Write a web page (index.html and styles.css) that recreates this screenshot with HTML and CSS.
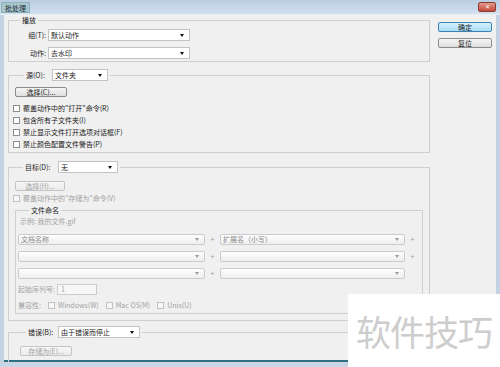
FILE: index.html
```html
<!DOCTYPE html>
<html lang="zh-CN">
<head>
    <meta charset="UTF-8">
    <title>批处理</title>
    <link rel="stylesheet" href="styles.css">
</head>
<body>
    <div class="window">
        <div class="titlebar">
            <span class="title">批处理</span>
            <span class="close">✕</span>
        </div>
        <div class="frame">
            <div class="main">
                <!-- 播放 -->
                <fieldset class="group play">
                    <legend class="legend-text">播放</legend>
                    <div class="rows">
                        <div class="row">
                            <span class="lbl lbl-play">组(T):</span>
                            <div class="select w142">默认动作</div>
                        </div>
                        <div class="row">
                            <span class="lbl lbl-play">动作:</span>
                            <div class="select w142">去水印</div>
                        </div>
                    </div>
                </fieldset>

                <!-- 源 -->
                <fieldset class="group source">
                    <legend class="legend-row lg-source">
                        <span class="lbl w24">源(O):</span>
                        <div class="select w56">文件夹</div>
                    </legend>
                    <button class="btn small">选择(C)...</button>
                    <div class="checks">
                        <label class="check"><span class="box"></span>覆盖动作中的"打开"命令(R)</label>
                        <label class="check"><span class="box"></span>包含所有子文件夹(I)</label>
                        <label class="check"><span class="box"></span>禁止显示文件打开选项对话框(F)</label>
                        <label class="check"><span class="box"></span>禁止颜色配置文件警告(P)</label>
                    </div>
                </fieldset>

                <!-- 目标 -->
                <fieldset class="group target">
                    <legend class="legend-row lg-target">
                        <span class="lbl w31">目标(D):</span>
                        <div class="select w60">无</div>
                    </legend>
                    <button class="btn small off">选择(H)...</button>
                    <label class="check off single"><span class="box"></span>覆盖动作中的"存储为"命令(V)</label>

                    <fieldset class="naming">
                        <legend class="legend-text">文件命名</legend>
                        <div class="sample off">示例: 我的文件.gif</div>
                        <div class="name-rows">
                            <div class="name-row">
                                <div class="select dis w187">文档名称</div>
                                <span class="plus">+</span>
                                <div class="select dis w185">扩展名（小写）</div>
                                <span class="plus">+</span>
                            </div>
                            <div class="name-row">
                                <div class="select dis w187"></div>
                                <span class="plus">+</span>
                                <div class="select dis w185"></div>
                                <span class="plus">+</span>
                            </div>
                            <div class="name-row">
                                <div class="select dis w187"></div>
                                <span class="plus">+</span>
                                <div class="select dis w185"></div>
                            </div>
                        </div>
                        <div class="serial off">
                            <span>起始序列号:</span>
                            <span class="input">1</span>
                        </div>
                        <div class="compat off">
                            <span>兼容性:</span>
                            <label class="check inline"><span class="box"></span>Windows(W)</label>
                            <label class="check inline"><span class="box"></span>Mac OS(M)</label>
                            <label class="check inline"><span class="box"></span>Unix(U)</label>
                        </div>
                    </fieldset>
                </fieldset>

                <!-- 错误 -->
                <fieldset class="group errors">
                    <legend class="legend-row lg-errors">
                        <span class="lbl w28">错误(B):</span>
                        <div class="select w82">由于错误而停止</div>
                    </legend>
                    <button class="btn small off save">存储为(E)...</button>
                </fieldset>
            </div>

            <div class="side">
                <button class="btn side-btn default">确定</button>
                <button class="btn side-btn">复位</button>
            </div>
        </div>

        <div class="watermark">软件技巧</div>
    </div>
</body>
</html>
```

FILE: styles.css
```css
:root {
    --face: #f0f0f0;
    --line: #cfcfcf;
    --text: #1a1a1a;
    --muted: #a3a3a3;
}

* {
    margin: 0;
    padding: 0;
    box-sizing: border-box;
}

body {
    width: 500px;
    height: 367px;
    overflow: hidden;
    background: var(--face);
    font-family: "Noto Sans CJK SC", "Liberation Sans", sans-serif;
    font-size: 7px;
    line-height: 9px;
    color: var(--text);
}

.window {
    position: relative;
    width: 500px;
    height: 367px;
    display: flex;
    flex-direction: column;
}

/* 标题栏 */
.titlebar {
    height: 15px;
    display: flex;
    align-items: center;
    justify-content: space-between;
    padding: 0 4px 0 1px;
    background: linear-gradient(#b9cde2, #d3e0ee);
    border-bottom: 1px solid #e9eff6;
}

.title {
    height: 11px;
    line-height: 10px;
    padding: 0 3px;
    background: #a8c6cc;
    border: 1px solid #8fb3ba;
    color: #1d2d36;
}

.close {
    width: 18px;
    height: 10px;
    margin-top: -1px;
    border-radius: 2px;
    background: linear-gradient(#e39a8e, #c4483a);
    border: 1px solid #8e3a30;
    color: #fff;
    font-size: 6px;
    line-height: 8px;
    text-align: center;
}

.frame {
    height: 352px;
    display: flex;
    overflow: hidden;
    border-left: 4px solid #c4d3e3;
    border-right: 4px solid #c4d3e3;
    border-bottom: 5px solid #c9d6e6;
    box-shadow: inset 0 -2px 0 #2f6f80;
}

.main {
    width: 422px;
    margin-left: 4px;
    padding-top: 1px;
}

.side {
    width: 54px;
    margin-left: 8px;
    padding-top: 7px;
    display: flex;
    flex-direction: column;
    gap: 6px;
}

/* 分组框 */
.group,
.naming {
    border: 1px solid var(--line);
    min-width: 0;
}

.group {
    width: 422px;
    padding: 0;
}

.legend-text {
    margin-left: 11px;
    padding: 0 2px;
    height: 9px;
    line-height: 9px;
}

.legend-row {
    display: flex;
    align-items: center;
    gap: 2px;
    height: 12px;
    padding: 0 2px;
}

.lg-source { margin-left: 15px; }
.lg-target { margin-left: 14px; }
.lg-errors { margin-left: 17px; }

.lbl { white-space: nowrap; }
.lbl-play { width: 37px; margin-right: 2px; text-align: right; }
.w24 { width: 24px; }
.w31 { width: 31px; }
.w28 { width: 28px; }

.rows {
    padding: 4px 0 2px;
    display: flex;
    flex-direction: column;
    gap: 6px;
}

.row {
    display: flex;
    align-items: center;
    height: 12px;
}

/* 下拉框 */
.select {
    height: 12px;
    display: flex;
    align-items: center;
    padding-left: 2px;
    background: #fff;
    border: 1px solid #c3c3c3;
    white-space: nowrap;
}

.select::after {
    content: "";
    margin-left: auto;
    margin-right: 5px;
    border-left: 2px solid transparent;
    border-right: 2px solid transparent;
    border-top: 3px solid #111;
}

.select.dis {
    height: 11px;
    color: #8a8a8a;
    background: linear-gradient(#fefefe, #eeeeee);
    border-color: #cbcbcb;
    border-radius: 2px;
}

.select.dis::after {
    border-top-color: #9a9a9a;
}

.w142 { width: 142px; }
.w56 { width: 56px; }
.w60 { width: 60px; }
.w82 { width: 82px; }
.w187 { width: 187px; }
.w185 { width: 185px; }

/* 按钮 */
.btn {
    font: inherit;
    color: var(--text);
    height: 10px;
    line-height: 8px;
    background: linear-gradient(#f6f6f6, #dedede);
    border: 1px solid #8c8c8c;
    border-radius: 2px;
}

.btn.small {
    display: block;
    width: 52px;
    margin: 6px 0 0 6px;
}

.btn.off {
    color: var(--muted);
    border-color: #c4c4c4;
    background: linear-gradient(#f6f6f6, #ececec);
}

.target .btn.small { margin-top: 8px; width: 50px; }
.save { margin-top: 8px !important; margin-left: 11px !important; }

.side-btn {
    width: 54px;
    height: 10px;
}

.side-btn.default {
    background: linear-gradient(#d6f0fc, #a9dcf5);
    border-color: #3b83b5;
}

/* 复选框 */
.checks {
    margin-top: 5px;
    padding-bottom: 2px;
}

.check {
    display: flex;
    align-items: center;
    height: 12px;
    padding-left: 4px;
    white-space: nowrap;
}

.box {
    width: 7px;
    height: 7px;
    margin-right: 3px;
    background: #fff;
    border: 1px solid #8e8e8e;
}

.check.off,
.off .check {
    color: var(--muted);
}

.check.off .box,
.off .box {
    border-color: #c2c2c2;
    background: #f7f7f7;
}

.check.single { margin-top: 1px; }

/* 文件命名 */
.naming {
    margin: 2px 6px 6px 6px;
    width: 408px;
    padding: 0 0 3px 2px;
}

.sample {
    height: 9px;
    margin-top: 2px;
    padding-left: 2px;
}

.off { color: var(--muted); }

.name-rows {
    margin-top: 8px;
    display: flex;
    flex-direction: column;
    gap: 6px;
}

.name-row {
    display: flex;
    align-items: center;
    height: 11px;
}

.plus {
    width: 15px;
    text-align: center;
    color: #9a9a9a;
}

.serial {
    display: flex;
    align-items: center;
    gap: 2px;
    height: 11px;
    margin-top: 5px;
}

.input {
    width: 40px;
    height: 11px;
    padding-left: 3px;
    line-height: 9px;
    border: 1px solid #cbcbcb;
    background: #f7f7f7;
}

.compat {
    display: flex;
    align-items: center;
    height: 10px;
    margin-top: 5px;
}

.compat > span { width: 30px; }

.check.inline {
    padding-left: 0;
    margin-right: 7px;
    height: 10px;
}

.errors { margin-top: 5px; height: 60px; }
.source { margin-top: 7px; }
.target { margin-top: 8px; padding-bottom: 0; }

/* 水印 */
.watermark {
    position: absolute;
    left: 348px;
    top: 294px;
    width: 152px;
    height: 73px;
    background: #fff;
    color: #cdcdcd;
    font-size: 35px;
    line-height: 73px;
    text-align: center;
    letter-spacing: -1px;
}
```
